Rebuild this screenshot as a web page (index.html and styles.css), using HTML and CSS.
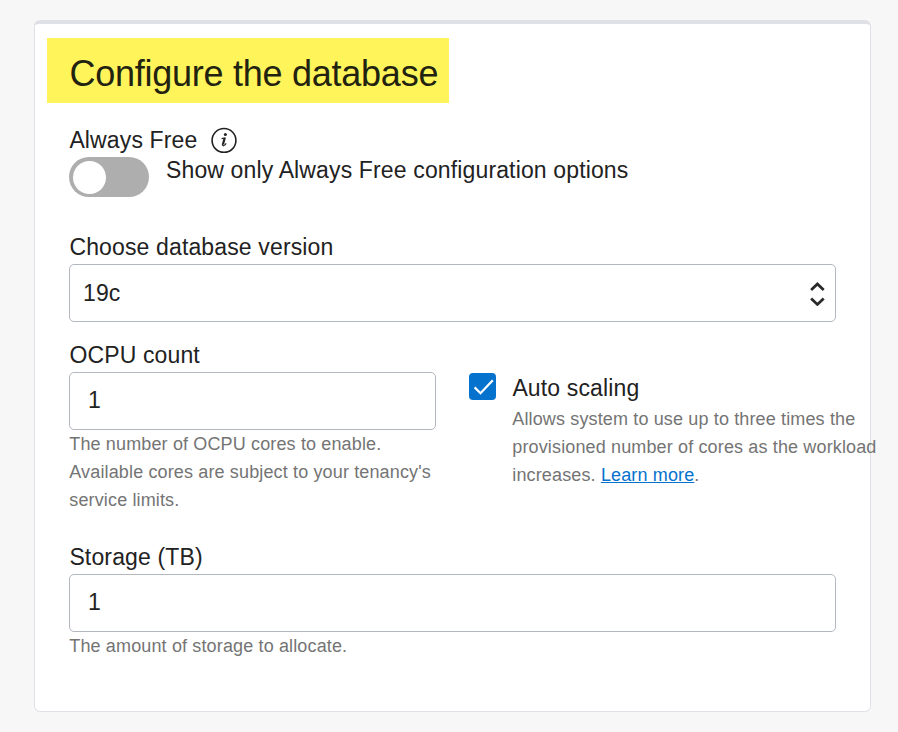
FILE: index.html
```html
<!DOCTYPE html>
<html lang="en">
<head>
<meta charset="utf-8">
<title>Configure the database</title>
<link rel="stylesheet" href="styles.css">
</head>
<body>
<main class="card">
  <h1 class="title">Configure the database</h1>
  <section class="free">
    <div class="label free-label">Always Free
      <svg class="info" width="28" height="28" viewBox="0 0 28 28"><circle cx="14" cy="14.4" r="11.9" fill="none" stroke="#222" stroke-width="1.6"/><circle cx="15.4" cy="8.6" r="1.5" fill="#222"/><path d="M14.7 12L13 18.2Q12.8 19.4 13.6 19.2" fill="none" stroke="#222" stroke-width="2.2"/><path d="M11.6 12.6L15.6 11.7M13.2 19.7Q15 19.4 16.2 17.4" fill="none" stroke="#222" stroke-width="1.1"/></svg>
    </div>
    <div class="toggle-row">
      <span class="toggle"><span class="knob"></span></span>
      <span class="toggle-text">Show only Always Free configuration options</span>
    </div>
  </section>
  <section class="version">
    <div class="label">Choose database version</div>
    <div class="field select"><span>19c</span>
      <svg width="16" height="26" viewBox="0 0 16 26"><path d="M2.1 9.9L8.4 4L14.7 9.9M2.1 18.5L8.4 24.4L14.7 18.5" fill="none" stroke="#2a2a2a" stroke-width="2.8"/></svg>
    </div>
  </section>
  <section class="columns">
    <div class="ocpu">
      <div class="label">OCPU count</div>
      <div class="field number">1</div>
      <p class="help">The number of OCPU cores to enable.<br>Available cores are subject to your tenancy's<br>service limits.</p>
    </div>
    <div class="scaling">
      <span class="check"><svg width="27" height="27" viewBox="0 0 27 27"><path d="M5.6 14.4L11.5 20.2L23.8 7.2" fill="none" stroke="#fff" stroke-width="2.2"/></svg></span>
      <div class="scaling-text">
        <div class="label">Auto scaling</div>
        <p class="help">Allows system to use up to three times the<br>provisioned number of cores as the workload<br>increases. <a href="#">Learn more</a>.</p>
      </div>
    </div>
  </section>
  <section class="storage">
    <div class="label">Storage (TB)</div>
    <div class="field number">1</div>
    <p class="help">The amount of storage to allocate.</p>
  </section>
</main>
</body>
</html>
```
FILE: styles.css
```css
* { box-sizing: border-box; }
body {
  margin: 0;
  padding: 20px 27px 20px 34px;
  background: #f7f7f7;
  color: #222;
  font: 23px/28px "Liberation Sans", Arial, sans-serif;
  letter-spacing: 0.14px;
}
.card {
  height: 692px;
  padding: 14px 34px 0 34px;
  border: 1px solid #dfe1e6;
  border-top-width: 4px;
  border-radius: 6px;
  background: #fff;
}
.title {
  width: 402px;
  height: 65px;
  margin: 0 0 23px -22px;
  padding-left: 22.4px;
  background: #fff45a;
  color: #222210;
  font-size: 36px;
  font-weight: 400;
  line-height: 71px;
  letter-spacing: -0.25px;
  white-space: nowrap;
}
.label { height: 31px; padding-left: 0.4px; white-space: nowrap; }
.free { height: 107px; }
.free-label { display: flex; gap: 12.6px; }
.toggle-row { display: flex; gap: 17px; }
.toggle {
  width: 80px;
  height: 40px;
  padding: 4px;
  border-radius: 20px;
  background: #aeaeae;
}
.knob {
  display: block;
  width: 33px;
  height: 33px;
  border-radius: 50%;
  background: #fff;
}
.toggle-text { line-height: 26px; white-space: nowrap; }
.field {
  height: 58px;
  border: 1px solid #b3b7bf;
  border-radius: 5px;
  line-height: 57px;
}
.select {
  display: flex;
  align-items: center;
  justify-content: space-between;
  padding: 0 10px 0 13px;
}
.number { padding-left: 18px; line-height: 54px; }
.version { height: 108px; }
.columns { display: flex; height: 202px; gap: 33px; }
.ocpu { width: 367px; }
.scaling { display: flex; width: 367px; gap: 16px; padding-top: 33px; }
.check {
  flex: none;
  width: 27px;
  height: 27px;
  margin-top: -1px;
  border-radius: 4px;
  background: #0572ce;
}
.check svg { display: block; }
.help {
  margin: 0;
  padding-left: 0.3px;
  color: #747474;
  font-size: 18px;
  line-height: 28px;
  white-space: nowrap;
}
a { color: #0572ce; }
```
